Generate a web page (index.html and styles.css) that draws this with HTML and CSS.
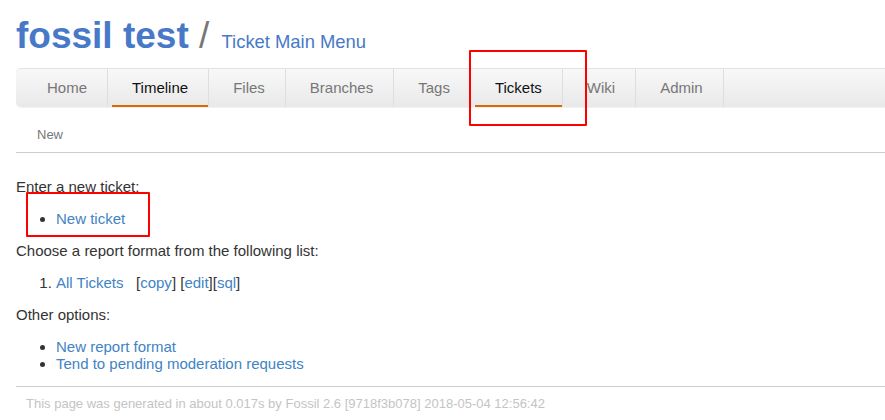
FILE: index.html
```html
<!DOCTYPE html>
<html>
<head>
<meta charset="utf-8">
<title>fossil test: Ticket Main Menu</title>
<link rel="stylesheet" href="styles.css">
</head>
<body>
<div class="page">
  <div class="title">
    <h1 class="project">fossil test</h1><span class="slash"> / </span><span class="subtitle">Ticket Main Menu</span>
  </div>
  <nav class="mainmenu">
    <span class="item"><a href="#">Home</a></span>
    <span class="item"><a href="#" class="active">Timeline</a></span>
    <span class="item"><a href="#">Files</a></span>
    <span class="item"><a href="#">Branches</a></span>
    <span class="item"><a href="#">Tags</a></span>
    <span class="item"><a href="#" class="active">Tickets</a></span>
    <span class="item"><a href="#">Wiki</a></span>
    <span class="item"><a href="#">Admin</a></span>
  </nav>
  <div class="submenu"><a href="#">New</a></div>
  <div class="content">
    <p>Enter a new ticket:</p>
    <ul><li><a href="#">New ticket</a></li></ul>
    <p>Choose a report format from the following list:</p>
    <ol><li><a href="#">All Tickets</a>&nbsp;&nbsp;&nbsp;[<a href="#">copy</a>] [<a href="#">edit</a>][<a href="#">sql</a>]</li></ol>
    <p>Other options:</p>
    <ul class="options">
      <li><a href="#">New report format</a></li>
      <li><a href="#">Tend to pending moderation requests</a></li>
    </ul>
  </div>
  <div class="footer">This page was generated in about 0.017s by Fossil 2.6 [9718f3b078] 2018-05-04 12:56:42</div>
</div>
<div class="mark mark-tickets"></div>
<div class="mark mark-new"></div>
</body>
</html>
```
FILE: styles.css
```css
html, body {
  margin: 0;
  padding: 0;
  background: #fff;
  overflow: hidden;
}
body {
  font-family: "Liberation Sans", Arial, sans-serif;
  font-size: 15px;
  color: #333;
  position: relative;
  width: 885px;
  height: 420px;
}
a {
  color: #4183c4;
  text-decoration: none;
}
.page {
  margin-left: 16px;
  width: 920px;
}
.title {
  padding-top: 15px;
  height: 41px;
  line-height: 42px;
  white-space: nowrap;
}
.project {
  display: inline;
  margin: 0;
  font-size: 37px;
  font-weight: bold;
  color: #4779c8;
}
.slash {
  font-size: 37px;
  color: #777;
}
.subtitle {
  font-size: 18.4px;
  color: #4779c8;
  margin-left: 2px;
}
.mainmenu {
  margin-top: 12px;
  height: 38px;
  border-top: 1px solid #e2e2e2;
  border-radius: 5px 0 0 5px;
  background: linear-gradient(#f8f8f8, #e9e9e9);
  box-shadow: 0 1px 1px rgba(0,0,0,0.06);
  display: flex;
  padding-left: 7px;
}
.item {
  display: flex;
  padding-left: 4px;
  border-right: 1px solid #dedede;
}
.item a {
  display: flex;
  align-items: center;
  padding: 0 20px 1px;
  color: #777;
  box-sizing: border-box;
  height: 38px;
}
.item a.active {
  color: #111;
  box-shadow: inset 0 -2px 0 #dd6600;
}
.submenu {
  height: 46px;
  box-sizing: border-box;
  padding: 20px 0 0 21px;
  border-bottom: 1px solid #ccc;
  font-size: 13px;
  line-height: 15px;
}
.submenu a {
  color: #777;
}
.content {
  padding-top: 10px;
  line-height: 17px;
}
.content p {
  margin: 15px 0;
}
.content ul, .content ol {
  margin: 15px 0;
  padding-left: 40px;
}
.content ul.options {
  margin-bottom: 14px;
}
.footer {
  border-top: 1px solid #ccc;
  padding: 9px 10px 10px;
  font-size: 13px;
  line-height: 15px;
  color: #c4c4c4;
  white-space: nowrap;
}
.mark {
  position: absolute;
  border: 2px solid #f00;
  border-radius: 1px;
  box-sizing: border-box;
}
.mark-tickets {
  left: 469px;
  top: 50px;
  width: 118px;
  height: 76px;
}
.mark-new {
  left: 26px;
  top: 192px;
  width: 124px;
  height: 45px;
}
```
